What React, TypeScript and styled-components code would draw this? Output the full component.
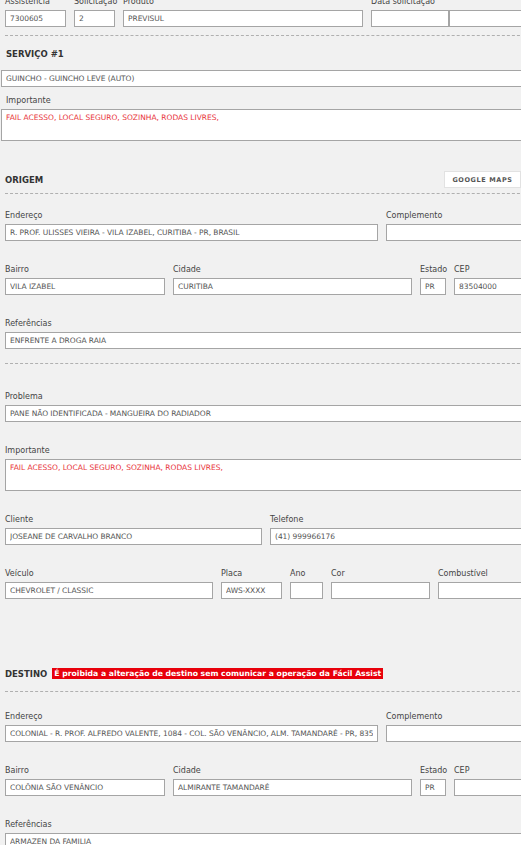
import React from "react";
import styled, { createGlobalStyle } from "styled-components";

const GlobalStyle = createGlobalStyle`
  html, body {
    margin: 0;
    padding: 0;
    background: #f1f1f1;
    overflow: hidden;
  }
  body {
    font-family: "DejaVu Sans", Verdana, sans-serif;
    color: #333;
  }
`;

type FieldProps = {
  label: string;
  value?: string;
  width?: number;
  red?: boolean;
  multiline?: boolean;
};

const Field = ({ label, value = "", width, red, multiline }: FieldProps) => (
  <FieldBox $width={width}>
    <Label>{label}</Label>
    {multiline ? (
      <TextArea $red={red} readOnly value={value} />
    ) : (
      <Input readOnly value={value} />
    )}
  </FieldBox>
);

export default function App() {
  return (
    <>
      <GlobalStyle />
      <Page>
        <TopRow>
          <Field label="Assistencia" value="7300605" width={61} />
          <Field label="Solicitaçao" value="2" width={41} />
          <Field label="Produto" value="PREVISUL" width={240} />
          <Field label="Data solicitaçao" value="" width={78} />
          <TightField>
            <Label>&nbsp;</Label>
            <Input readOnly value="" />
          </TightField>
        </TopRow>
        <Divider $top={8} />

        <ServiceBlock>
          <Heading>SERVIÇO #1</Heading>
          <Input readOnly value="GUINCHO - GUINCHO LEVE (AUTO)" />
          <ImportantField>
            <Label>Importante</Label>
            <TextArea $red readOnly value="FAIL ACESSO, LOCAL SEGURO, SOZINHA, RODAS LIVRES," />
          </ImportantField>
        </ServiceBlock>

        <SectionHead $top={30}>
          <Heading>ORIGEM</Heading>
          <MapsButton>GOOGLE MAPS</MapsButton>
        </SectionHead>
        <Divider $top={5} />

        <Section $top={14}>
          <Row>
            <Field label="Endereço" value="R. PROF. ULISSES VIEIRA - VILA IZABEL, CURITIBA - PR, BRASIL" width={373} />
            <Field label="Complemento" value="" />
          </Row>
          <Row>
            <Field label="Bairro" value="VILA IZABEL" width={160} />
            <Field label="Cidade" value="CURITIBA" width={239} />
            <Field label="Estado" value="PR" width={26} />
            <Field label="CEP" value="83504000" />
          </Row>
          <Row>
            <Field label="Referências" value="ENFRENTE A DROGA RAIA" />
          </Row>
        </Section>
        <Divider $top={14} />

        <Section $top={25}>
          <Row>
            <Field label="Problema" value="PANE NÃO IDENTIFICADA - MANGUEIRA DO RADIADOR" />
          </Row>
          <Row>
            <Field label="Importante" value="FAIL ACESSO, LOCAL SEGURO, SOZINHA, RODAS LIVRES," red multiline />
          </Row>
          <Row>
            <Field label="Cliente" value="JOSEANE DE CARVALHO BRANCO" width={257} />
            <Field label="Telefone" value="(41) 999966176" />
          </Row>
          <Row>
            <Field label="Veículo" value="CHEVROLET / CLASSIC" width={208} />
            <Field label="Placa" value="AWS-XXXX" width={61} />
            <Field label="Ano" value="" width={33} />
            <Field label="Cor" value="" width={99} />
            <Field label="Combustível" value="" />
          </Row>
        </Section>

        <SectionHead $top={66}>
          <Heading>DESTINO</Heading>
          <Warning>É proibida a alteração de destino sem comunicar a operação da Fácil Assist</Warning>
        </SectionHead>
        <Divider $top={9} />

        <Section $top={17}>
          <Row>
            <Field
              label="Endereço"
              value="COLONIAL - R. PROF. ALFREDO VALENTE, 1084 - COL. SÃO VENÂNCIO, ALM. TAMANDARÉ - PR, 83504-"
              width={373}
            />
            <Field label="Complemento" value="" />
          </Row>
          <Row>
            <Field label="Bairro" value="COLÔNIA SÃO VENÂNCIO" width={160} />
            <Field label="Cidade" value="ALMIRANTE TAMANDARÉ" width={239} />
            <Field label="Estado" value="PR" width={26} />
            <Field label="CEP" value="" />
          </Row>
          <Row>
            <Field label="Referências" value="ARMAZEN DA FAMILIA" />
          </Row>
        </Section>
      </Page>
    </>
  );
}

const Page = styled.div`
  width: 540px;
  margin-top: -6px;
`;

const TopRow = styled.div`
  display: flex;
  gap: 8px;
  padding-left: 5px;
`;

const TightField = styled.div`
  display: flex;
  flex-direction: column;
  gap: 3px;
  flex: 1;
  margin-left: -8px;
`;

const FieldBox = styled.div<{ $width?: number }>`
  display: flex;
  flex-direction: column;
  gap: 3px;
  ${(p) => (p.$width ? `width: ${p.$width}px; flex: none;` : "flex: 1;")}
  min-width: 0;
`;

const Label = styled.label`
  display: block;
  font-size: 8px;
  line-height: 13px;
  height: 13px;
  padding-top: 1px;
  box-sizing: border-box;
  color: #444;
  white-space: nowrap;
`;

const Input = styled.input`
  box-sizing: border-box;
  display: block;
  width: 100%;
  height: 17px;
  margin: 0;
  padding: 0 4px;
  border: 1px solid #a5a5a5;
  background: #fff;
  font-family: inherit;
  font-size: 7.5px;
  letter-spacing: -0.05px;
  line-height: 15px;
  color: #555;
  outline: none;
`;

const TextArea = styled.textarea<{ $red?: boolean }>`
  box-sizing: border-box;
  display: block;
  width: 100%;
  height: 32px;
  margin: 0;
  padding: 2px 4px;
  border: 1px solid #a5a5a5;
  background: #fff;
  font-family: inherit;
  font-size: 7.5px;
  line-height: 11px;
  color: ${(p) => (p.$red ? "#e8333a" : "#555")};
  resize: both;
  outline: none;
`;

const Divider = styled.hr<{ $top: number }>`
  margin: ${(p) => p.$top}px 0 0 5px;
  border: none;
  border-top: 1px dashed #b0b0b0;
  height: 0;
`;

const ServiceBlock = styled.div`
  display: flex;
  flex-direction: column;
  padding: 11px 0 0 1px;
  gap: 9px;
`;

const ImportantField = styled.div`
  display: flex;
  flex-direction: column;
  gap: 3px;
  margin-top: -3px;

  & > label {
    padding-left: 5px;
  }
`;

const Heading = styled.h3`
  margin: 0;
  font-size: 8.5px;
  line-height: 14px;
  font-weight: bold;
  color: #333;
  padding-left: 5px;
  white-space: nowrap;
`;

const SectionHead = styled.div<{ $top: number }>`
  display: flex;
  align-items: center;
  gap: 5px;
  margin-top: ${(p) => p.$top}px;
  height: 17px;
`;

const MapsButton = styled.button`
  margin-left: auto;
  margin-right: 19px;
  width: 77px;
  height: 17px;
  background: #fff;
  border: 1px solid #e2e2e2;
  font-family: inherit;
  font-size: 6.5px;
  font-weight: bold;
  letter-spacing: 0.6px;
  color: #555;
  padding: 0;
  cursor: pointer;
`;

const Warning = styled.span`
  background: #e8000b;
  color: #fff;
  font-size: 7.7px;
  font-weight: bold;
  line-height: 11px;
  padding: 0 2px;
  white-space: nowrap;
`;

const Section = styled.div<{ $top: number }>`
  display: flex;
  flex-direction: column;
  gap: 21px;
  margin-top: ${(p) => p.$top}px;
  padding-left: 5px;
`;

const Row = styled.div`
  display: flex;
  gap: 8px;
`;
